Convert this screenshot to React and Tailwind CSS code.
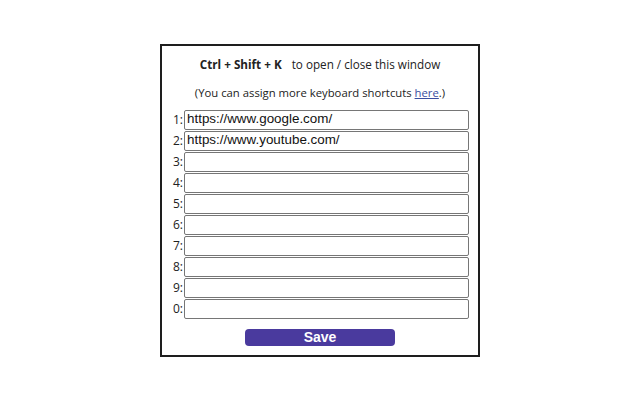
export default function App() {
  const urls = ['https://www.google.com/', 'https://www.youtube.com/', '', '', '', '', '', '', '', '']
  const keys = ['1', '2', '3', '4', '5', '6', '7', '8', '9', '0']

  return (
    <div className="w-[640px] h-[400px] bg-white flex items-center justify-center" style={{ fontFamily: '"Open Sans", "Noto Sans", sans-serif' }}>
      <div className="w-[320px] h-[313px] border-2 border-[#1e1e1e] bg-white flex flex-col items-center pt-[8px]">
        <p className="text-[11.7px] text-[#222] leading-[20px]">
          <span className="font-bold">Ctrl + Shift + K</span>
          <span className="ml-[10px]">to open / close this window</span>
        </p>
        <p className="text-[11.3px] text-[#222] leading-[20px] mt-[9px]">
          (You can assign more keyboard shortcuts <a href="#" className="underline text-[#3b4ea0]">here</a>.)
        </p>
        <div className="flex flex-col gap-px mt-[7px] w-full pl-[6px] pr-[9px]">
          {urls.map((url, i) => (
            <div key={i} className="flex items-center">
              <span className="w-[16px] text-right text-[12px] text-[#222] pr-[1px]">{keys[i]}:</span>
              <input
                type="text"
                defaultValue={url}
                className="flex-1 h-[20px] border border-[#767676] rounded-[2px] px-[2px] text-[13.4px] text-[#111] outline-none"
                style={{ fontFamily: '"Liberation Sans", Arial, sans-serif' }}
              />
            </div>
          ))}
        </div>
        <button
          className="mt-[10px] w-[150px] h-[17px] rounded-[4px] bg-[#4a3a9e] text-white text-[14px] leading-[17px] font-bold"
          style={{ fontFamily: '"Liberation Sans", Arial, sans-serif' }}
        >
          Save
        </button>
      </div>
    </div>
  )
}
